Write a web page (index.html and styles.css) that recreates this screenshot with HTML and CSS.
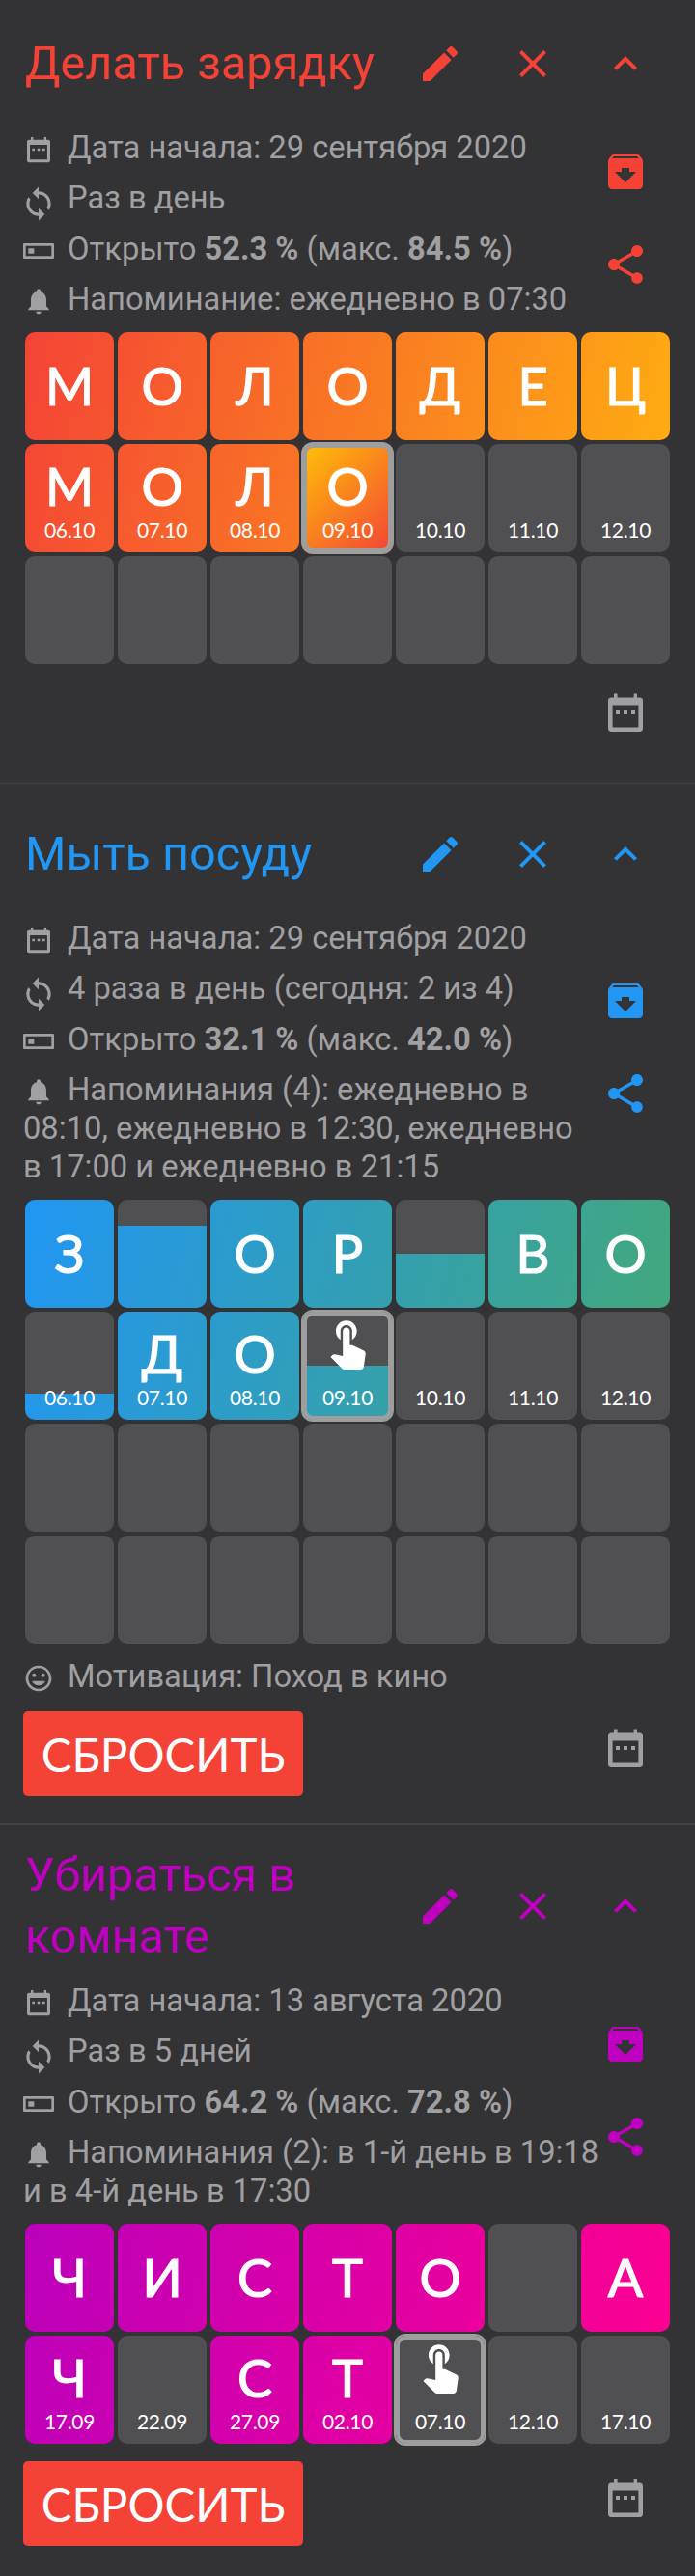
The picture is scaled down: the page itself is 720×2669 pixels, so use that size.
FILE: index.html
```html
<!DOCTYPE html>
<html lang="ru">
<head>
<meta charset="utf-8">
<title>Привычки</title>
<link rel="stylesheet" href="styles.css">
</head>
<body>
<svg class="defs" width="0" height="0" aria-hidden="true">
  <symbol id="i-edit" viewBox="0 0 24 24"><path d="M3 17.25V21h3.75L17.81 9.94l-3.75-3.75L3 17.25zM20.71 7.04c.39-.39.39-1.02 0-1.41l-2.34-2.34c-.39-.39-1.02-.39-1.41 0l-1.83 1.83 3.75 3.75 1.83-1.83z"/></symbol>
  <symbol id="i-close" viewBox="0 0 24 24"><path d="M19 6.41L17.59 5 12 10.59 6.41 5 5 6.41 10.59 12 5 17.59 6.41 19 12 13.41 17.59 19 19 17.59 13.41 12z"/></symbol>
  <symbol id="i-up" viewBox="0 0 24 24"><path d="M12 8l-6 6 1.41 1.41L12 10.83l4.59 4.58L18 14z"/></symbol>
  <symbol id="i-archive" viewBox="0 0 24 24"><path d="M20.54 5.23l-1.39-1.68C18.88 3.21 18.47 3 18 3H6c-.47 0-.88.21-1.16.55L3.46 5.23C3.17 5.57 3 6.02 3 6.5V19c0 1.1.9 2 2 2h14c1.1 0 2-.9 2-2V6.5c0-.48-.17-.93-.46-1.27zM12 17.5L6.5 12H10v-2h4v2h3.5L12 17.5zM5.12 5l.81-1h12l.94 1H5.12z"/></symbol>
  <symbol id="i-share" viewBox="0 0 24 24"><path d="M18 16.08c-.76 0-1.44.3-1.96.77L8.91 12.7c.05-.23.09-.46.09-.7s-.04-.47-.09-.7l7.05-4.11c.54.5 1.25.81 2.04.81 1.66 0 3-1.34 3-3s-1.34-3-3-3-3 1.34-3 3c0 .24.04.47.09.7L8.04 9.81C7.5 9.31 6.79 9 6 9c-1.66 0-3 1.34-3 3s1.34 3 3 3c.79 0 1.5-.31 2.04-.81l7.12 4.16c-.05.21-.08.43-.08.65 0 1.61 1.31 2.92 2.92 2.92 1.61 0 2.92-1.31 2.92-2.92s-1.31-2.92-2.92-2.92z"/></symbol>
  <symbol id="i-cal" viewBox="0 0 24 24"><path fill-rule="evenodd" d="M6 2.2h1.8v2.1h8.5V2.2H18v2.1h1.5c.8 0 1.5.7 1.5 1.5v14.7c0 .8-.7 1.5-1.5 1.5h-15c-.8 0-1.5-.7-1.5-1.5V5.8c0-.8.7-1.5 1.5-1.5H6zM5.3 8.3v11.4h13.4V8.3zM7 11h2v2H7zM11 11h2v2h-2zM15 11h2v2h-2z"/></symbol>
  <symbol id="i-sync" viewBox="0 0 24 24"><path d="M12 4V1L8 5l4 4V6c3.31 0 6 2.69 6 6 0 1.01-.25 1.97-.7 2.8l1.46 1.46C19.54 15.03 20 13.57 20 12c0-4.42-3.58-8-8-8zm0 14c-3.31 0-6-2.69-6-6 0-1.01.25-1.97.7-2.8L5.24 7.74C4.46 8.97 4 10.43 4 12c0 4.42 3.58 8 8 8v3l4-4-4-4v3z"/></symbol>
  <symbol id="i-open" viewBox="0 0 24 24"><path fill-rule="evenodd" d="M1 6h22c.6 0 1 .4 1 1v10c0 .6-.4 1-1 1H1c-.6 0-1-.4-1-1V7c0-.6.4-1 1-1zm1 2v8h20V8zM4 10h4.500v4H4z"/></symbol>
  <symbol id="i-bell" viewBox="0 0 24 24"><path d="M12 22c1.1 0 2-.9 2-2h-4c0 1.1.89 2 2 2zm6-6v-5c0-3.07-1.64-5.64-4.500-6.320V4c0-.83-.67-1.500-1.500-1.500s-1.500.67-1.500 1.500v.68C7.630 5.360 6 7.920 6 11v5l-2 2v1h16v-1l-2-2z"/></symbol>
  <symbol id="i-smile" viewBox="0 0 24 24"><path d="M11.990 2C6.470 2 2 6.480 2 12s4.470 10 9.990 10C17.520 22 22 17.520 22 12S17.520 2 11.990 2zM12 20c-4.420 0-8-3.580-8-8s3.580-8 8-8 8 3.580 8 8-3.580 8-8 8zm3.500-9c.83 0 1.500-.67 1.500-1.500S16.330 8 15.500 8 14 8.670 14 9.500s.67 1.500 1.500 1.500zm-7 0c.83 0 1.500-.67 1.500-1.500S9.330 8 8.500 8 7 8.670 7 9.500 7.670 11 8.500 11zm3.500 6.500c2.330 0 4.310-1.460 5.110-3.500H6.890c.8 2.040 2.780 3.500 5.110 3.500z"/></symbol>
  <symbol id="i-touch" viewBox="0 0 24 24"><path d="M9 11.240V7.500C9 6.120 10.120 5 11.500 5S14 6.120 14 7.500v3.740c1.210-.81 2-2.180 2-3.740C16 5.010 13.990 3 11.500 3S7 5.010 7 7.500c0 1.560.79 2.930 2 3.740zm9.840 4.630l-4.540-2.260c-.17-.07-.35-.11-.54-.11H13v-6c0-.83-.67-1.500-1.500-1.500S10 6.670 10 7.500v10.740l-3.430-.72c-.08-.01-.15-.03-.24-.03-.31 0-.59.13-.79.33l-.79.8 4.940 4.940c.27.27.65.44 1.060.44h6.790c.75 0 1.330-.55 1.440-1.280l.75-5.270c.01-.07.02-.14.02-.2 0-.62-.38-1.160-.91-1.380z"/></symbol>
</svg>

<main class="list">

<section class="task task-red">
  <header class="head">
    <h2 class="title">Делать зарядку</h2>
    <div class="actions">
      <span class="act"><svg class="ico48"><use href="#i-edit"/></svg></span>
      <span class="act"><svg class="ico48"><use href="#i-close"/></svg></span>
      <span class="act"><svg class="ico48"><use href="#i-up"/></svg></span>
    </div>
  </header>
  <div class="body">
    <div class="info">
      <p class="row"><svg class="ico32"><use href="#i-cal"/></svg>Дата начала: 29 сентября 2020</p>
      <p class="row"><svg class="ico32 ico-sync"><use href="#i-sync"/></svg>Раз в день</p>
      <p class="row"><svg class="ico32"><use href="#i-open"/></svg>Открыто <b>52.3 %</b> (макс. <b>84.5 %</b>)</p>
      <p class="row"><svg class="ico32"><use href="#i-bell"/></svg>Напоминание: ежедневно в 07:30</p>
    </div>
    <div class="side">
      <svg class="ico48"><use href="#i-archive"/></svg>
      <svg class="ico48"><use href="#i-share"/></svg>
    </div>
  </div>
  <div class="grid">
    <div class="tile on"><span class="letter">М</span></div>
    <div class="tile on"><span class="letter">О</span></div>
    <div class="tile on"><span class="letter">Л</span></div>
    <div class="tile on"><span class="letter">О</span></div>
    <div class="tile on"><span class="letter">Д</span></div>
    <div class="tile on"><span class="letter">Е</span></div>
    <div class="tile on"><span class="letter">Ц</span></div>
    <div class="tile on dated"><span class="letter">М</span><span class="date">06.10</span></div>
    <div class="tile on dated"><span class="letter">О</span><span class="date">07.10</span></div>
    <div class="tile on dated"><span class="letter">Л</span><span class="date">08.10</span></div>
    <div class="tile dated now flip"><span class="letter">О</span><span class="date">09.10</span></div>
    <div class="tile dated"><span class="letter"></span><span class="date">10.10</span></div>
    <div class="tile dated"><span class="letter"></span><span class="date">11.10</span></div>
    <div class="tile dated"><span class="letter"></span><span class="date">12.10</span></div>
    <div class="tile"></div><div class="tile"></div><div class="tile"></div><div class="tile"></div><div class="tile"></div><div class="tile"></div><div class="tile"></div>
  </div>
  <footer class="foot foot-plain">
    <svg class="ico48 muted"><use href="#i-cal"/></svg>
  </footer>
</section>

<section class="task task-blue">
  <header class="head">
    <h2 class="title">Мыть посуду</h2>
    <div class="actions">
      <span class="act"><svg class="ico48"><use href="#i-edit"/></svg></span>
      <span class="act"><svg class="ico48"><use href="#i-close"/></svg></span>
      <span class="act"><svg class="ico48"><use href="#i-up"/></svg></span>
    </div>
  </header>
  <div class="body">
    <div class="info">
      <p class="row"><svg class="ico32"><use href="#i-cal"/></svg>Дата начала: 29 сентября 2020</p>
      <p class="row"><svg class="ico32 ico-sync"><use href="#i-sync"/></svg>4 раза в день (сегодня: 2 из 4)</p>
      <p class="row"><svg class="ico32"><use href="#i-open"/></svg>Открыто <b>32.1 %</b> (макс. <b>42.0 %</b>)</p>
      <p class="row"><svg class="ico32"><use href="#i-bell"/></svg>Напоминания (4): ежедневно в<br>08:10, ежедневно в 12:30, ежедневно<br>в 17:00 и ежедневно в 21:15</p>
    </div>
    <div class="side">
      <svg class="ico48"><use href="#i-archive"/></svg>
      <svg class="ico48"><use href="#i-share"/></svg>
    </div>
  </div>
  <div class="grid">
    <div class="tile on"><span class="letter">З</span></div>
    <div class="tile on part" style="--e:27px"></div>
    <div class="tile on"><span class="letter">О</span></div>
    <div class="tile on"><span class="letter">Р</span></div>
    <div class="tile on part" style="--e:56px"></div>
    <div class="tile on"><span class="letter">В</span></div>
    <div class="tile on"><span class="letter">О</span></div>
    <div class="tile on part dated" style="--e:85px"><span class="letter"></span><span class="date">06.10</span></div>
    <div class="tile on dated"><span class="letter">Д</span><span class="date">07.10</span></div>
    <div class="tile on dated"><span class="letter">О</span><span class="date">08.10</span></div>
    <div class="tile on part dated now" style="--e:56px"><span class="letter"><svg class="hand"><use href="#i-touch"/></svg></span><span class="date">09.10</span></div>
    <div class="tile dated"><span class="letter"></span><span class="date">10.10</span></div>
    <div class="tile dated"><span class="letter"></span><span class="date">11.10</span></div>
    <div class="tile dated"><span class="letter"></span><span class="date">12.10</span></div>
    <div class="tile"></div><div class="tile"></div><div class="tile"></div><div class="tile"></div><div class="tile"></div><div class="tile"></div><div class="tile"></div>
    <div class="tile"></div><div class="tile"></div><div class="tile"></div><div class="tile"></div><div class="tile"></div><div class="tile"></div><div class="tile"></div>
  </div>
  <p class="row motive"><svg class="ico32"><use href="#i-smile"/></svg>Мотивация: Поход в кино</p>
  <footer class="foot foot-after-row">
    <button class="reset" type="button">СБРОСИТЬ</button>
    <svg class="ico48 muted"><use href="#i-cal"/></svg>
  </footer>
</section>

<section class="task task-pink">
  <header class="head">
    <h2 class="title">Убираться в<br>комнате</h2>
    <div class="actions">
      <span class="act"><svg class="ico48"><use href="#i-edit"/></svg></span>
      <span class="act"><svg class="ico48"><use href="#i-close"/></svg></span>
      <span class="act"><svg class="ico48"><use href="#i-up"/></svg></span>
    </div>
  </header>
  <div class="body">
    <div class="info">
      <p class="row"><svg class="ico32"><use href="#i-cal"/></svg>Дата начала: 13 августа 2020</p>
      <p class="row"><svg class="ico32 ico-sync"><use href="#i-sync"/></svg>Раз в 5 дней</p>
      <p class="row"><svg class="ico32"><use href="#i-open"/></svg>Открыто <b>64.2 %</b> (макс. <b>72.8 %</b>)</p>
      <p class="row"><svg class="ico32"><use href="#i-bell"/></svg>Напоминания (2): в 1-й день в 19:18<br>и в 4-й день в 17:30</p>
    </div>
    <div class="side">
      <svg class="ico48"><use href="#i-archive"/></svg>
      <svg class="ico48"><use href="#i-share"/></svg>
    </div>
  </div>
  <div class="grid">
    <div class="tile on"><span class="letter">Ч</span></div>
    <div class="tile on"><span class="letter">И</span></div>
    <div class="tile on"><span class="letter">С</span></div>
    <div class="tile on"><span class="letter">Т</span></div>
    <div class="tile on"><span class="letter">О</span></div>
    <div class="tile"></div>
    <div class="tile on"><span class="letter">А</span></div>
    <div class="tile on dated"><span class="letter">Ч</span><span class="date">17.09</span></div>
    <div class="tile dated"><span class="letter"></span><span class="date">22.09</span></div>
    <div class="tile on dated"><span class="letter">С</span><span class="date">27.09</span></div>
    <div class="tile on dated"><span class="letter">Т</span><span class="date">02.10</span></div>
    <div class="tile dated now"><span class="letter"><svg class="hand"><use href="#i-touch"/></svg></span><span class="date">07.10</span></div>
    <div class="tile dated"><span class="letter"></span><span class="date">12.10</span></div>
    <div class="tile dated"><span class="letter"></span><span class="date">17.10</span></div>
  </div>
  <footer class="foot foot-after-grid">
    <button class="reset" type="button">СБРОСИТЬ</button>
    <svg class="ico48 muted"><use href="#i-cal"/></svg>
  </footer>
</section>

</main>
</body>
</html>
```

FILE: styles.css
```css
* { box-sizing: border-box; }

html, body {
  margin: 0;
  padding: 0;
  background: #333234;
}

body {
  font-family: "Roboto", "Noto Sans", sans-serif;
  color: #a09fa1;
}

.defs { position: absolute; }

svg { fill: currentColor; display: block; }

.list { display: flex; flex-direction: column; }

.task {
  padding: 0 24px;
  color: var(--accent);
}
.task-red {
  --accent: #f44336;
  --from: #f44336;
  --to: #ffb010;
  padding-top: 14px;
  border-bottom: 1px solid #414042;
}
.task-blue {
  --accent: #2196f3;
  --from: #2196f3;
  --to: #43a878;
  border-bottom: 2px solid #414042;
}
.task-pink {
  --accent: #c000c0;
  --from: #bb00bb;
  --to: #ff0090;
}

.head {
  display: flex;
  align-items: center;
  padding: 21px 0 15px;
}
.task-red .head { padding-top: 0; }
.task-pink .head { padding: 20px 0 14px; }

.title {
  flex: 1;
  margin: 0 0 0 2px;
  font-size: 48.6px;
  font-weight: 400;
  line-height: 64px;
}

.actions { display: flex; }

.act {
  width: 96px;
  height: 104px;
  display: flex;
  align-items: center;
  justify-content: center;
}

.ico48 { width: 48px; height: 48px; }

.ico32 {
  display: inline-block;
  width: 32px;
  height: 32px;
  margin-right: 14px;
  vertical-align: -7px;
  color: #a09fa1;
}

.ico-sync {
  width: 38px;
  height: 38px;
  margin: -4px 11px -4px -3px;
  vertical-align: -10px;
}

.body { display: flex; }

.info {
  flex: 1;
  min-width: 0;
  display: flex;
  flex-direction: column;
  gap: 12px;
}

.row {
  margin: 0;
  font-size: 32.7px;
  line-height: 40px;
  white-space: nowrap;
  color: #a09fa1;
}
.row b { font-weight: 700; }

.side {
  width: 96px;
  flex: none;
  display: flex;
  flex-direction: column;
  align-items: center;
  justify-content: center;
  gap: 48px;
  padding-bottom: 12px;
}

.grid {
  margin: 14px 0 0 2px;
  width: 668px;
  display: grid;
  grid-template-columns: repeat(7, 92px);
  grid-auto-rows: 112px;
  gap: 4px;
}

.tile {
  --c: 0;
  --r: 0;
  --e: 0px;
  border-radius: 10px;
  background-color: #504f51;
  display: flex;
  flex-direction: column;
  align-items: center;
  justify-content: center;
  color: #fff;
  font-family: "Lato", "Noto Sans", sans-serif;
}
.tile:nth-child(7n+2) { --c: 1; }
.tile:nth-child(7n+3) { --c: 2; }
.tile:nth-child(7n+4) { --c: 3; }
.tile:nth-child(7n+5) { --c: 4; }
.tile:nth-child(7n+6) { --c: 5; }
.tile:nth-child(7n) { --c: 6; }
.tile:nth-child(n+8) { --r: 1; }

.on {
  background-image: linear-gradient(105deg, var(--from), var(--to));
  background-size: 668px 228px;
  background-repeat: no-repeat;
  background-position: calc(var(--c) * -96px) calc(var(--r) * -116px);
}

.part {
  background-image:
    linear-gradient(#504f51, #504f51),
    linear-gradient(105deg, var(--from), var(--to));
  background-size: 100% var(--e), 668px 228px;
  background-position: 0 0, calc(var(--c) * -96px) calc(var(--r) * -116px);
}

.dated {
  justify-content: flex-start;
  padding-top: 12px;
}

.letter {
  font-size: 54px;
  font-weight: 400;
  line-height: 64px;
  -webkit-text-stroke: 1.2px #fff;
}
.dated .letter { height: 64px; }

.date {
  margin-top: 1px;
  font-size: 21px;
  line-height: 24px;
  letter-spacing: -0.3px;
}

.now {
  box-shadow: 0 0 0 2px #9e9e9e, inset 0 0 0 4px #9e9e9e;
}
.flip {
  background-image: linear-gradient(135deg, #ffc107, #f44336);
}

.hand {
  width: 58px;
  height: 58px;
  margin-top: -10px;
  color: #fff;
}

.motive { margin-top: 14px; }

.foot {
  display: flex;
  align-items: center;
  justify-content: space-between;
  color: #a09fa1;
}
.foot .ico48 { margin-bottom: 12px; }
.muted { color: #a09fa1; }

.foot-plain {
  justify-content: flex-end;
  margin-top: 26px;
  padding: 0 24px 37px 0;
}
.foot-after-row {
  margin-top: 16px;
  padding: 0 24px 28px 0;
}
.foot-after-grid {
  margin-top: 18px;
  padding: 0 24px 33px 0;
}

.reset {
  width: 290px;
  height: 88px;
  padding: 0;
  border: 0;
  border-radius: 5px;
  background: #f44336;
  color: #fff;
  font-family: "Lato", "Noto Sans", sans-serif;
  font-size: 47.5px;
  font-weight: 400;
}
```
